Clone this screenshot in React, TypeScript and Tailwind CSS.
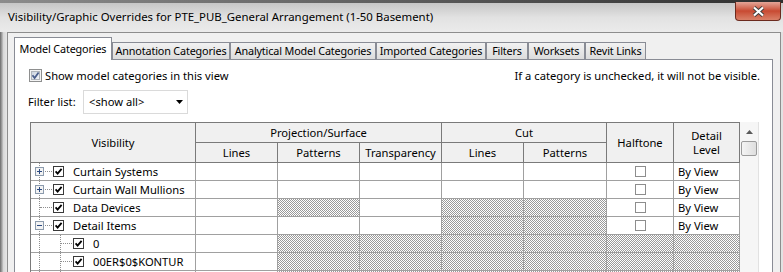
import React from "react";

type Row = {
  name: string;
  level: 0 | 1;
  expander?: "plus" | "minus";
  hatch: number[];
};

const rows: Row[] = [
  { name: "Curtain Systems", level: 0, expander: "plus", hatch: [] },
  { name: "Curtain Wall Mullions", level: 0, expander: "plus", hatch: [] },
  { name: "Data Devices", level: 0, hatch: [2, 4, 5] },
  { name: "Detail Items", level: 0, expander: "minus", hatch: [4, 5] },
  { name: "0", level: 1, hatch: [2, 3, 4, 5, 6, 7] },
  { name: "00ER$0$KONTUR", level: 1, hatch: [2, 3, 4, 5, 6, 7] },
  { name: "", level: 1, hatch: [2, 3, 4, 5, 6, 7] },
];

const tabs = [
  { label: "Annotation Categories", w: "w-[118px]" },
  { label: "Analytical Model Categories", w: "w-[146px]" },
  { label: "Imported Categories", w: "w-[110px]" },
  { label: "Filters", w: "w-[42px]" },
  { label: "Worksets", w: "w-[57px]" },
  { label: "Revit Links", w: "w-[61px]" },
];

const cols = "grid grid-cols-[165px_82px_82px_82px_82px_83px_67px_66px]";
const hatched =
  "bg-[image:repeating-conic-gradient(#9a9a9a_0_25%,#ffffff_0_50%)] bg-[length:2px_2px]";

function WinCheck() {
  return (
    <svg width="13" height="13" viewBox="0 0 13 13">
      <defs>
        <linearGradient id="cbFill" x1="0" y1="0" x2="1" y2="1">
          <stop offset="0" stopColor="#c9d2de" />
          <stop offset="1" stopColor="#f7f8fa" />
        </linearGradient>
      </defs>
      <rect x="0.5" y="0.5" width="12" height="12" fill="#f4f4f4" stroke="#8e8f8f" />
      <rect x="2.5" y="2.5" width="8" height="8" fill="url(#cbFill)" stroke="#b0b5bb" />
      <path d="M3.5 6.3 L5.6 9 L9.6 3.4" stroke="#4a5e8c" strokeWidth="1.8" fill="none" />
    </svg>
  );
}

function GridCheck({ checked }: { checked: boolean }) {
  return (
    <svg width="11" height="11" viewBox="0 0 11 11" className="shrink-0">
      <rect
        x="0.5"
        y="0.5"
        width="10"
        height="10"
        fill="#fff"
        stroke={checked ? "#3a3a3a" : "#8d8d8d"}
      />
      {checked && (
        <path d="M2.6 5.4 L4.6 7.6 L8.6 2.8" stroke="#000" strokeWidth="1.8" fill="none" />
      )}
    </svg>
  );
}

function Expander({ kind }: { kind: "plus" | "minus" }) {
  return (
    <svg width="9" height="9" viewBox="0 0 9 9" className="absolute left-[4px] top-[4px]">
      <rect x="0.5" y="0.5" width="8" height="8" fill="#f3f3f3" stroke="#8c9bad" />
      <path d="M2 4.5 H7" stroke="#2b4a82" />
      {kind === "plus" && <path d="M4.5 2 V7" stroke="#2b4a82" />}
    </svg>
  );
}

function VisibilityCell({ row }: { row: Row }) {
  const dotted = "absolute border-dotted border-[#8e8e8e]";
  return (
    <div className="relative flex h-[18px] items-center border-r border-b border-[#a0a0a0] bg-white">
      <span className={`${dotted} left-[8px] top-0 bottom-0 border-l`} />
      {row.level === 0 ? (
        <span className={`${dotted} left-[9px] top-[8px] w-[12px] border-t`} />
      ) : (
        <>
          <span className={`${dotted} left-[29px] top-0 bottom-0 border-l`} />
          <span className={`${dotted} left-[30px] top-[8px] w-[11px] border-t`} />
        </>
      )}
      {row.expander && <Expander kind={row.expander} />}
      {row.name && (
        <div className={`relative flex items-center ${row.level === 0 ? "pl-[22px]" : "pl-[42px]"}`}>
          <GridCheck checked />
          <span className="ml-[9px] whitespace-nowrap">{row.name}</span>
        </div>
      )}
    </div>
  );
}

function BodyRow({ row }: { row: Row }) {
  const cell = (i: number) =>
    `h-[18px] border-r border-b border-[#a0a0a0] ${row.hatch.includes(i) ? hatched : "bg-white"}`;
  return (
    <>
      <VisibilityCell row={row} />
      {[1, 2, 3, 4, 5].map((i) => (
        <div key={i} className={cell(i)} />
      ))}
      <div className={`${cell(6)} flex items-center justify-center`}>
        {!row.hatch.includes(6) && <GridCheck checked={false} />}
      </div>
      <div className={`${cell(7)} flex items-center pl-[4px]`}>
        {!row.hatch.includes(7) && <span>By View</span>}
      </div>
    </>
  );
}

export default function App() {
  const head = "flex items-center justify-center border-r border-b border-[#7a7a7a] bg-[#f0f0f0]";
  return (
    <div className="relative h-[272px] w-[783px] overflow-hidden bg-[#dedede] font-['Noto_Sans',sans-serif] text-[11.2px] leading-none text-black">
      {/* window top edge */}
      <div className="h-[3px] bg-gradient-to-r from-[#8c8c8c] via-[#5e5e5e] to-[#2f2f2f]" />

      {/* title bar */}
      <div className="flex h-[29px] items-start bg-gradient-to-b from-[#c6c6c6] via-[#e2e2e2] to-[#ebebeb] pl-[8px] pt-[8px]">
        <span className="whitespace-nowrap text-[11.4px]">
          Visibility/Graphic Overrides for PTE_PUB_General Arrangement (1-50 Basement)
        </span>
      </div>

      {/* close button */}
      <div className="absolute right-[2px] top-[2px] flex h-[19px] w-[46px] items-center justify-center rounded-b-[4px] border border-t-0 border-[#6b2a1e] bg-gradient-to-b from-[#e3a598] via-[#c84a32] to-[#d98068]">
        <svg width="15" height="11" viewBox="0 0 15 11">
          <path d="M3 1.5 L12 9.5 M12 1.5 L3 9.5" stroke="#3d3d3d" strokeWidth="4" />
          <path d="M3 1.5 L12 9.5 M12 1.5 L3 9.5" stroke="#ffffff" strokeWidth="2.2" />
        </svg>
      </div>

      <div className="flex h-[240px]">
        {/* left aero frame */}
        <div className="w-[7px] bg-gradient-to-r from-[#6a6a6a] via-[#d8d8d8] to-[#e6e6e6]" />

        {/* client area */}
        <div className="w-[774px] border-t border-r border-l border-[#8d8d8d] bg-[#f0f0f0] pt-[4px] pr-[7px] pl-[6px]">
          {/* tabs */}
          <div className="flex h-[22px] items-end text-[10.8px] tracking-[-0.15px]">
            <div className="relative z-10 -mb-px flex h-[23px] w-[98px] items-center justify-center border-t border-r border-l border-[#898c95] bg-white">
              Model Categories
            </div>
            {tabs.map((t) => (
              <div
                key={t.label}
                className={`flex h-[17px] ${t.w} items-center justify-center border-t border-r border-l border-[#898c95] bg-gradient-to-b from-[#f2f2f2] to-[#dcdcdc] whitespace-nowrap`}
              >
                {t.label}
              </div>
            ))}
          </div>

          {/* tab page */}
          <div className="h-[220px] border border-[#898c95] bg-white pt-[9px]">
            <div className="flex h-[13px] items-center pr-[12px] pl-[14px]">
              <WinCheck />
              <span className="ml-[3px]">Show model categories in this view</span>
              <span className="ml-auto">If a category is unchecked, it will not be visible.</span>
            </div>

            <div className="mt-[8px] flex h-[24px] items-center pl-[13px]">
              <span className="w-[55px]">Filter list:</span>
              <div className="flex h-[24px] w-[105px] items-center border border-[#dadada] bg-white pr-[4px] pl-[5px]">
                <span>&lt;show all&gt;</span>
                <svg width="7" height="4" viewBox="0 0 7 4" className="ml-auto">
                  <path d="M0 0 H7 L3.5 4 Z" fill="#000" />
                </svg>
              </div>
            </div>

            {/* grid */}
            <div className="mt-[8px] ml-[15px] flex">
              <div className="border-t border-l border-[#7a7a7a]">
                <div className={`${cols} grid-rows-[20px_20px]`}>
                  <div className={`${head} row-span-2`}>Visibility</div>
                  <div className={`${head} col-span-3`}>Projection/Surface</div>
                  <div className={`${head} col-span-2`}>Cut</div>
                  <div className={`${head} row-span-2`}>Halftone</div>
                  <div className={`${head} row-span-2 flex-col gap-[3px] text-center`}>
                    <span>Detail</span>
                    <span>Level</span>
                  </div>
                  <div className={head}>Lines</div>
                  <div className={head}>Patterns</div>
                  <div className={head}>Transparency</div>
                  <div className={head}>Lines</div>
                  <div className={head}>Patterns</div>
                </div>
                <div className={cols}>
                  {rows.map((r, i) => (
                    <BodyRow key={i} row={r} />
                  ))}
                </div>
              </div>

              {/* scrollbar */}
              <div className="w-[19px] border-r border-[#e2e2e2] bg-[#f6f6f6] pt-[1px]">
                <div className="flex h-[18px] items-center justify-center">
                  <svg width="7" height="4" viewBox="0 0 7 4">
                    <path d="M3.5 0 L7 4 H0 Z" fill="#5a5a5a" />
                  </svg>
                </div>
                <div className="mx-[1px] h-[15px] rounded-[2px] border border-[#9b9b9b] bg-gradient-to-r from-[#f4f4f4] to-[#dedede]" />
              </div>
            </div>
          </div>
        </div>

        <div className="w-[2px] bg-[#e2e2e2]" />
      </div>
    </div>
  );
}
